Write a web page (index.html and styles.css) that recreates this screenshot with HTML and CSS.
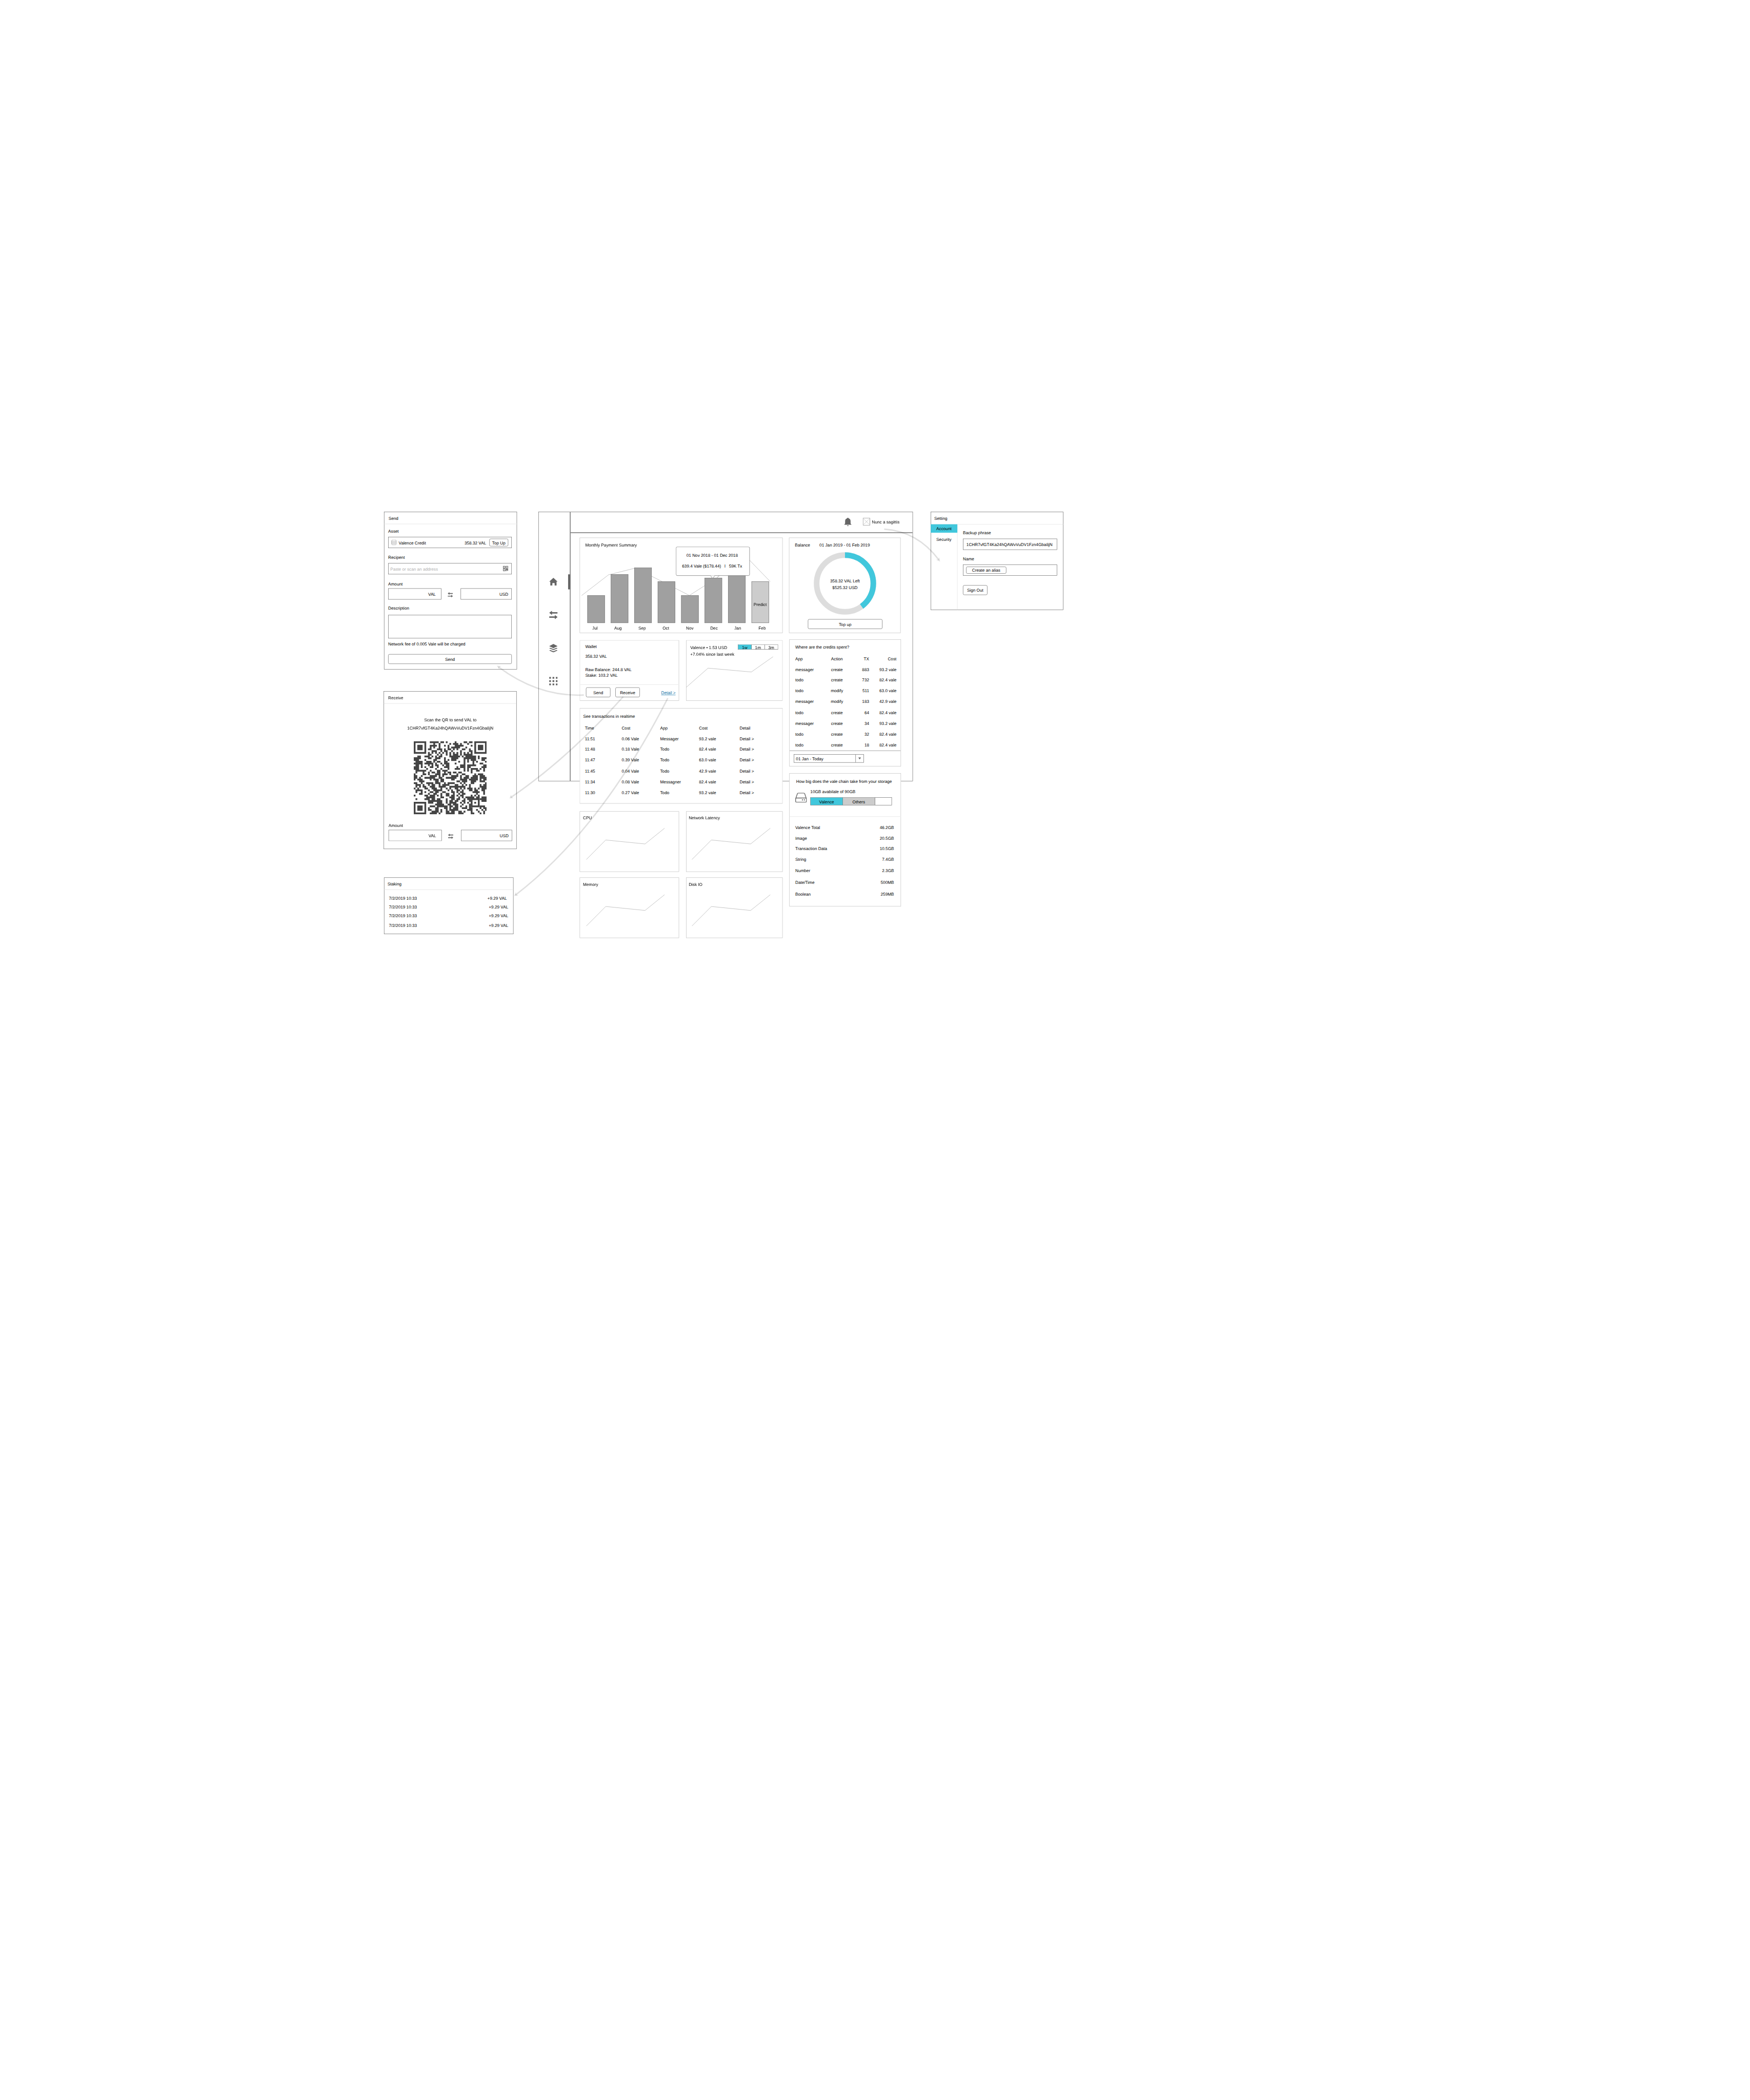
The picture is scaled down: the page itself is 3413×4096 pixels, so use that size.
FILE: index.html
```html
<!DOCTYPE html>
<html lang="en">
<head>
<meta charset="utf-8">
<title>Valence wallet wireframe</title>
<link rel="stylesheet" href="styles.css">
</head>
<body>
<svg class="defs" width="0" height="0" aria-hidden="true">
  <symbol id="i-swap" viewBox="0 0 24 24"><path d="M0 6 8 0v4h16v4H8v4zM24 18l-8-6v4H0v4h16v4z"/></symbol>
  <symbol id="i-home" viewBox="0 -1 24 24"><path d="M12 0 24 11h-3v11h-5.500v-6q0-1-1-1h-4.500q-1 0-1 1v6H3.200V11H0z"/></symbol>
  <symbol id="i-layers" viewBox="0 0 24 24"><path d="M12 0 24 6 12 11.800 0 6zM0 12.300 3 10.900l9 3.700 9-3.700 3 1.400-12 5.300zM0 18.500l3-1.400 9 3.800 9-3.800 3 1.400L12 24z"/></symbol>
  <symbol id="i-grid" viewBox="0 0 24 24"><path d="M0 0h5v5H0zM9.500 0h5v5h-5zM19 0h5v5h-5zM0 9.500h5v5H0zM9.500 9.500h5v5h-5zM19 9.500h5v5h-5zM0 19h5v5H0zM9.500 19h5v5h-5zM19 19h5v5h-5z"/></symbol>
</svg>

<div class="board">

  <!-- Send -->
  <section class="window window--send">
    <header class="window__head">Send</header>
    <div class="send">
      <div class="label label--first">Asset</div>
      <div class="field asset">
        <svg class="asset__icon" viewBox="0 0 15 16"><g fill="none" stroke="#777" stroke-width=".8"><ellipse cx="7.500" cy="3" rx="7" ry="2.500"/><path d="M.5 3v9.500c0 1.400 3.100 2.600 7 2.600s7-1.200 7-2.600V3M.5 6c0 1.400 3.100 2.600 7 2.600s7-1.200 7-2.600M.5 9.200c0 1.400 3.100 2.600 7 2.600s7-1.200 7-2.600"/></g></svg>
        <span class="asset__name">Valence Credit</span>
        <span class="asset__sum">358.32 VAL</span>
        <button class="btn btn--top">Top Up</button>
      </div>
      <div class="label label--recipient">Recipent</div>
      <div class="field recipient">
        <span>Paste or scan an address</span>
        <svg class="recipient__icon" viewBox="0 0 15 15"><path fill-rule="evenodd" d="M0 0h7v7H0zM1.500 1.500v4h4v-4zM8 0h7v7H8zM9.500 1.500v4h4v-4zM0 8h7v7H0zM1.500 9.500v4h4v-4zM3 3h1.200v1.200H3zM11 3h1.200v1.200H11zM3 11h1.200v1.200H3zM8 8h4.500v1.500h1V8H15v5h-3.500v-1.500H10V15H8zM11.500 14H13v1h-1.500zM14 14h1v1h-1z"/></svg>
      </div>
      <div class="label label--amount">Amount</div>
      <div class="amounts">
        <div class="field field--val">VAL</div>
        <svg class="swap"><use href="#i-swap"/></svg>
        <div class="field field--usd">USD</div>
      </div>
      <div class="label label--description">Description</div>
      <div class="field field--area"></div>
      <div class="label label--fee">Network fee of 0.005 Vale will be charged</div>
      <button class="btn btn--submit">Send</button>
    </div>
  </section>

  <!-- Receive -->
  <section class="window window--receive">
    <header class="window__head">Receive</header>
    <div class="receive">
      <p class="receive__hint">Scan the QR to send VAL to</p>
      <p class="receive__address">1CHR7vfGT4Ka24hQAWvVuDV1Fzn4Gba8jN</p>
      <svg class="qr" viewBox="0 0 41 41">
        <path fill="#444" fill-rule="evenodd" d="M0 0h7v7H0zM1 1v5h5V1zM2 2h3v3H2zM34 0h7v7h-7zM35 1v5h5V1zM36 2h3v3h-3zM0 34h7v7H0zM1 35v5h5v-5zM2 36h3v3H2zM32 32h5v5h-5zM33 33v3h3v-3zM34 34h1v1h-1z"/>
        <g transform="translate(0 .5)"><path fill="none" stroke="#444" stroke-width="1.02" d="
M9 0h5M15 0h2M18 0h1M23 0h1M28 0h2M31 0h2
M11 1h1M14 1h1M20 1h1M22 1h3M26 1h1M30 1h1
M9 2h4M14 2h1M17 2h1M19 2h1M23 2h5M32 2h1
M9 3h1M11 3h1M14 3h1M19 3h1M21 3h5M29 3h1
M8 4h2M13 4h3M17 4h1M19 4h2M22 4h1M24 4h1M27 4h2M31 4h1
M10 5h3M15 5h1M17 5h2M21 5h1M26 5h1M31 5h2
M8 6h1M10 6h1M12 6h1M14 6h1M16 6h1M18 6h1M20 6h1M22 6h1M24 6h1M26 6h1M28 6h1M30 6h1M32 6h1
M8 7h2M13 7h1M15 7h1M18 7h1M20 7h1M22 7h3M26 7h1M28 7h5
M2 8h2M6 8h3M10 8h1M12 8h1M14 8h2M20 8h6M27 8h1M29 8h6M36 8h1
M0 9h4M8 9h2M12 9h3M17 9h1M21 9h4M28 9h7M36 9h1M38 9h3
M0 10h3M6 10h1M11 10h2M17 10h1M19 10h1M21 10h3M28 10h1M30 10h1M32 10h3M38 10h2
M1 11h4M7 11h3M11 11h1M13 11h2M17 11h2M25 11h1M28 11h1M30 11h1M33 11h1M35 11h1M40 11h1
M0 12h5M6 12h5M12 12h1M15 12h1M17 12h3M23 12h1M28 12h1M33 12h1M37 12h2
M1 13h2M4 13h1M8 13h1M10 13h1M12 13h2M16 13h1M18 13h2M26 13h3M30 13h5M39 13h2
M0 14h3M4 14h1M6 14h1M9 14h2M13 14h1M17 14h3M24 14h1M26 14h3M30 14h2M38 14h3
M0 15h3M7 15h1M12 15h1M15 15h1M19 15h1M23 15h3M28 15h1M30 15h1M32 15h4M37 15h1M39 15h1
M1 16h6M9 16h1M13 16h2M16 16h3M28 16h1M30 16h1M32 16h1M35 16h2M39 16h1
M1 17h1M5 17h1M8 17h1M10 17h2M13 17h2M17 17h1M19 17h2M22 17h2M25 17h2M32 17h1
M0 18h1M5 18h2M8 18h1M12 18h3M16 18h3M20 18h1M24 18h1M27 18h2M34 18h1M36 18h3
M0 19h2M4 19h1M9 19h4M14 19h1M16 19h1M21 19h4M26 19h1M29 19h2M33 19h3M37 19h3
M0 20h2M3 20h1M6 20h6M14 20h2M18 20h6M26 20h1M28 20h3M32 20h4M37 20h4
M0 21h1M2 21h3M9 21h1M11 21h3M15 21h2M21 21h2M26 21h4M31 21h5M37 21h1M39 21h2
M3 22h3M12 22h2M15 22h2M24 22h2M27 22h3M32 22h3M37 22h3
M0 23h2M4 23h1M7 23h4M12 23h3M17 23h1M19 23h4M26 23h1M28 23h1M32 23h2M40 23h1
M1 24h3M5 24h1M8 24h1M10 24h2M14 24h1M16 24h4M23 24h2M27 24h1M29 24h1M31 24h1M37 24h1M39 24h2
M1 25h1M3 25h1M5 25h2M9 25h3M14 25h4M20 25h9M31 25h1M37 25h4
M0 26h1M2 26h1M6 26h2M10 26h3M15 26h1M18 26h1M20 26h1M23 26h2M26 26h1M28 26h1M30 26h3M34 26h1M36 26h1M38 26h3
M1 27h4M8 27h1M11 27h5M19 27h1M21 27h1M24 27h2M27 27h1M31 27h2M34 27h2M38 27h2
M1 28h1M4 28h1M6 28h1M9 28h2M12 28h2M16 28h2M21 28h2M24 28h1M26 28h2M33 28h4M39 28h1
M3 29h2M8 29h1M11 29h2M15 29h1M18 29h2M22 29h1M25 29h1M27 29h2M35 29h1M39 29h1
M0 30h1M6 30h2M9 30h3M13 30h1M15 30h1M18 30h2M21 30h2M24 30h1M26 30h2M32 30h1M34 30h1M36 30h1
M7 31h5M15 31h2M20 31h3M25 31h1M27 31h1M29 31h5M35 31h2M38 31h3
M1 32h1M6 32h3M10 32h2M13 32h2M18 32h1M21 32h2M24 32h2M28 32h1M30 32h2M37 32h4
M8 33h5M13 33h3M18 33h1M20 33h2M23 33h2M27 33h2M31 33h1M38 33h3
M8 34h3M13 34h3M18 34h1M20 34h4M26 34h1M28 34h1M30 34h1
M12 35h5M19 35h2M22 35h3M27 35h1M31 35h1
M9 36h3M13 36h6M20 36h2M23 36h2M26 36h1M29 36h1M31 36h1M37 36h3
M8 37h1M12 37h2M17 37h2M20 37h1M22 37h3M27 37h3M31 37h2M37 37h1M39 37h2
M8 38h2M12 38h2M15 38h1M18 38h1M20 38h5M30 38h3M35 38h1M38 38h1M40 38h1
M10 39h4M15 39h1M18 39h2M21 39h2M25 39h2M28 39h1M32 39h1M36 39h1M39 39h1
M9 40h4M14 40h1M18 40h5M25 40h3M32 40h2M37 40h1M39 40h1"/></g>
      </svg>
      <div class="label label--qr">Amount</div>
      <div class="amounts">
        <div class="field field--val">VAL</div>
        <svg class="swap"><use href="#i-swap"/></svg>
        <div class="field field--usd">USD</div>
      </div>
    </div>
  </section>

  <!-- Staking -->
  <section class="window window--staking">
    <header class="window__head window__head--staking">Staking</header>
    <ul class="staking">
      <li><span>7/2/2019 10:33</span><span class="staking__first">+9.29 VAL</span></li>
      <li><span>7/2/2019 10:33</span><span>+9.29 VAL</span></li>
      <li><span>7/2/2019 10:33</span><span>+9.29 VAL</span></li>
      <li><span>7/2/2019 10:33</span><span>+9.29 VAL</span></li>
    </ul>
  </section>

  <!-- Dashboard -->
  <section class="window window--dashboard">
    <nav class="sidebar">
      <a class="sidebar__item sidebar__item--active"><svg><use href="#i-home"/></svg></a>
      <a class="sidebar__item"><svg><use href="#i-swap"/></svg></a>
      <a class="sidebar__item"><svg><use href="#i-layers"/></svg></a>
      <a class="sidebar__item sidebar__item--last"><svg><use href="#i-grid"/></svg></a>
    </nav>
    <div class="main">
      <header class="topbar">
        <svg class="topbar__bell" viewBox="0 0 21 24"><path d="M10.200 0c1.300 0 2 .9 2 2 3.600.9 5.800 3.600 5.800 7.500v5.500c0 1.800.8 3.300 2.400 4.300v1H0v-1c1.600-1 2.400-2.500 2.400-4.300V9.500C2.400 5.600 4.600 2.900 8.200 2c0-1.100.7-2 2-2zM7.700 22h5c0 1.200-1.100 2-2.500 2s-2.500-.8-2.500-2z"/></svg>
        <svg class="topbar__avatar" viewBox="0 0 21 21"><rect x=".5" y=".5" width="20" height="20" fill="#fff" stroke="#666"/><path d="M3 3l15 15M18 3 3 18" stroke="#999" stroke-width=".8"/></svg>
        <span class="topbar__name">Nunc a sagittis</span>
      </header>

      <div class="content">
        <div class="content__left">

          <article class="card card--summary">
            <h2>Monthly Payment Summary</h2>
            <svg class="bars" viewBox="0 28 580 244">
              <path class="trend" d="M5.700 165.500 82.500 106.300 159.500 87 236.500 126 313.500 165.300 390.500 116 467.500 46 544.500 125.700"/>
              <g fill="#a0a0a0" stroke="#666">
                <rect x="22.500" y="165.500" width="49" height="78"/>
                <rect x="89.500" y="105.500" width="49" height="138"/>
                <rect x="156.500" y="86.500" width="49" height="157"/>
                <rect x="223.500" y="125.500" width="49" height="118"/>
                <rect x="290.500" y="165.500" width="49" height="78"/>
                <rect x="357.500" y="115.500" width="49" height="128"/>
                <rect x="424.500" y="46.500" width="49" height="197"/>
                <rect x="491.500" y="125.500" width="49" height="118" fill="#ccc"/>
              </g>
              <path class="trend" d="M391.500 115.500 400 108"/>
              <g text-anchor="middle">
                <text x="515.600" y="196">Predict</text>
                <text x="43.700" y="263">Jul</text>
                <text x="109.700" y="263">Aug</text>
                <text x="178.500" y="263">Sep</text>
                <text x="246.200" y="263">Oct</text>
                <text x="314.600" y="263">Nov</text>
                <text x="383.800" y="263">Dec</text>
                <text x="451.400" y="263">Jan</text>
                <text x="521.400" y="263">Feb</text>
              </g>
            </svg>
            <div class="tooltip">
              <p>01 Nov 2018 - 01 Dec 2018</p>
              <p>639.4 Vale ($178.44)&nbsp;&nbsp; l &nbsp;&nbsp;59K Tx</p>
              <svg class="tooltip__tip" viewBox="0 0 12 10"><path d="M0 0h12v1L6 9 0 1z" fill="#fff"/><path d="M.2 1 6 9l5.800-8" fill="none" stroke="#666"/></svg>
            </div>
          </article>

          <div class="pair">
            <article class="card card--wallet">
              <h2>Wallet</h2>
              <p class="wallet__sum">358.32 VAL</p>
              <p class="wallet__raw">Raw Balance: 244.8 VAL</p>
              <p class="wallet__stake">Stake: 103.2 VAL</p>
              <footer class="wallet__foot">
                <button class="btn btn--small">Send</button>
                <button class="btn btn--small">Receive</button>
                <a class="wallet__link">Detail &gt;</a>
              </footer>
            </article>
            <article class="card card--rate">
              <header class="rate__head">
                <h2>Valence • 1.53 USD</h2>
                <div class="tabs"><span class="tabs__on">1w</span><span>1m</span><span>3m</span></div>
              </header>
              <p class="rate__note">+7.04% since last week</p>
              <svg class="spark" viewBox="0 0 276 120"><path class="trend" d="M.7 86.700 62.800 32 186.500 43 248.600-.700"/></svg>
            </article>
          </div>

          <article class="card card--transactions">
            <h2>See transactions in realtime</h2>
            <table class="table table--transactions">
              <colgroup><col class="w-time"><col class="w-cost"><col class="w-app"><col class="w-vale"><col class="w-detail"></colgroup>
              <tr class="short"><td>Time</td><td>Cost</td><td>App</td><td>Cost</td><td>Detail</td></tr>
              <tr class="short"><td>11:51</td><td>0.06 Vale</td><td>Messager</td><td>93.2 vale</td><td>Detail &gt;</td></tr>
              <tr><td>11:48</td><td>0.18 Vale</td><td>Todo</td><td>82.4 vale</td><td>Detail &gt;</td></tr>
              <tr><td>11:47</td><td>0.39 Vale</td><td>Todo</td><td>63.0 vale</td><td>Detail &gt;</td></tr>
              <tr><td>11:45</td><td>0.04 Vale</td><td>Todo</td><td>42.9 vale</td><td>Detail &gt;</td></tr>
              <tr><td>11:34</td><td>0.08 Vale</td><td>Messagner</td><td>82.4 vale</td><td>Detail &gt;</td></tr>
              <tr><td>11:30</td><td>0.27 Vale</td><td>Todo</td><td>93.2 vale</td><td>Detail &gt;</td></tr>
            </table>
          </article>

          <div class="pair pair--metrics">
            <article class="card card--metric">
              <h2>CPU</h2>
              <svg class="spark" viewBox="0 0 276 120"><path class="trend" d="M19.200 111.700 74.500 56 186.800 67.300 242.600 22.300"/></svg>
            </article>
            <article class="card card--metric card--right">
              <h2>Network Latency</h2>
              <svg class="spark" viewBox="0 0 276 120"><path class="trend" d="M16.900 111.700 72.300 56 184.500 67.300 240.700 22.300"/></svg>
            </article>
          </div>
          <div class="pair pair--metrics pair--last">
            <article class="card card--metric">
              <h2>Memory</h2>
              <svg class="spark" viewBox="0 0 276 120"><path class="trend" d="M19.200 111.700 74.500 56 186.800 67.300 242.600 22.300"/></svg>
            </article>
            <article class="card card--metric card--right">
              <h2>Disk IO</h2>
              <svg class="spark" viewBox="0 0 276 120"><path class="trend" d="M16.900 111.700 72.300 56 184.500 67.300 240.700 22.300"/></svg>
            </article>
          </div>
        </div>

        <div class="content__right">
          <article class="card card--balance">
            <header class="balance__head"><h2>Balance</h2><span>01 Jan 2019 - 01 Feb 2019</span></header>
            <div class="donut">
              <svg viewBox="0 0 180 180">
                <circle cx="90" cy="90" r="81" fill="none" stroke="#ddd" stroke-width="16"/>
                <circle cx="90" cy="90" r="81" fill="none" stroke="#41c7dc" stroke-width="16" pathLength="100" stroke-dasharray="40 60" transform="rotate(-90 90 90)"/>
              </svg>
              <div class="donut__text"><p>358.32 VAL Left</p><p>$525.32 USD</p></div>
            </div>
            <button class="btn btn--topup">Top up</button>
          </article>

          <article class="card card--credits">
            <h2>Where are the credits spent?</h2>
            <table class="table table--credits">
              <colgroup><col class="w-name"><col class="w-action"><col class="w-tx"><col class="w-sum"></colgroup>
              <tr class="short"><td>App</td><td>Action</td><td>TX</td><td>Cost</td></tr>
              <tr class="short"><td>messager</td><td>create</td><td>883</td><td>93.2 vale</td></tr>
              <tr><td>todo</td><td>create</td><td>732</td><td>82.4 vale</td></tr>
              <tr><td>todo</td><td>modify</td><td>511</td><td>63.0 vale</td></tr>
              <tr><td>messager</td><td>modify</td><td>183</td><td>42.9 vale</td></tr>
              <tr><td>todo</td><td>create</td><td>64</td><td>82.4 vale</td></tr>
              <tr><td>messager</td><td>create</td><td>34</td><td>93.2 vale</td></tr>
              <tr><td>todo</td><td>create</td><td>32</td><td>82.4 vale</td></tr>
              <tr class="short"><td>todo</td><td>create</td><td>18</td><td>82.4 vale</td></tr>
            </table>
            <footer class="credits__foot">
              <div class="select"><span>01 Jan - Today</span><i><svg viewBox="0 0 8 6"><path d="M0 0h8L4 6z"/></svg></i></div>
            </footer>
          </article>

          <article class="card card--storage">
            <div class="storage__top">
              <h2>How big does the vale chain take from your storage</h2>
              <div class="storage__disk">
                <svg class="storage__icon" viewBox="0 0 33 28"><g fill="none" stroke="#666" stroke-width="2"><rect x="1" y="15" width="31" height="12" rx="2.500"/><path d="M1.300 16.500 6 3q.7-2 2.700-2h15.600q2 0 2.700 2l4.700 13.500"/></g><circle cx="20.500" cy="20.500" r="1.700"/><circle cx="26" cy="20.500" r="1.700"/></svg>
                <div>
                  <p>10GB avabilale of 90GB</p>
                  <div class="usage"><span class="usage__vale">Valence</span><span class="usage__other">Others</span></div>
                </div>
              </div>
            </div>
            <ul class="sizes">
              <li>Valence Total<span>46.2GB</span></li>
              <li>Image<span>20.5GB</span></li>
              <li>Transaction Data<span>10.5GB</span></li>
              <li class="sizes__32">String<span>7.4GB</span></li>
              <li class="sizes__34">Number<span>2.3GB</span></li>
              <li class="sizes__34">Date/Time<span>500MB</span></li>
              <li>Boolean<span>259MB</span></li>
            </ul>
          </article>
        </div>
      </div>
    </div>
  </section>

  <!-- Setting -->
  <section class="window window--setting">
    <header class="window__head window__head--setting">Setting</header>
    <div class="setting">
      <nav class="setting__menu">
        <a class="setting__on">Account</a>
        <a>Security</a>
      </nav>
      <div class="setting__form">
        <div class="label label--phrase">Backup phrase</div>
        <div class="field setting__phrase">1CHR7vfGT4Ka24hQAWvVuDV1Fzn4Gba8jN</div>
        <div class="label label--name">Name</div>
        <div class="field setting__name"><button class="btn btn--alias">Create an alias</button></div>
        <button class="btn btn--signout">Sign Out</button>
      </div>
    </div>
  </section>

  <!-- Flow arrows between the windows -->
  <svg class="flows" viewBox="0 0 3200 2800">
    <g fill="none" stroke="#000" stroke-opacity=".12" stroke-width="4">
      <path d="M2526 1512Q2621 1518 2682 1599.500"/>
      <path d="M1668 1985.700Q1540 1992 1424.500 1906"/>
      <path d="M1780.400 1990.500Q1622 2168 1460 2278"/>
      <path d="M1907.700 1995Q1718 2368 1473 2557"/>
    </g>
    <g fill="#000" fill-opacity=".12">
      <path d="M2685.700 1604.300 2683 1592.300 2681 1599 2673.700 1599z"/>
      <path d="M1419.700 1902.300 1432 1903.500 1425.500 1906.500 1426 1913z"/>
      <path d="M1455.700 2281 1460.500 2270 1461 2277 1467 2280z"/>
      <path d="M1469 2560 1474 2548.500 1474.500 2555.500 1481 2558.500z"/>
    </g>
  </svg>
</div>
</body>
</html>
```

FILE: styles.css
```css
:root {
  --ink: #000;
  --line: #666;
  --card: #bfbfbf;
  --rule: #efefef;
  --accent: #41c7dc;
}

* { box-sizing: border-box; margin: 0; padding: 0; }

body {
  width: 3413px;
  height: 4096px;
  overflow: hidden;
  background: #fff;
}

svg { display: block; fill: var(--line); }
.defs { position: absolute; }

/* The board is laid out in design units and scaled down as a whole */
.board {
  position: relative;
  width: 3200px;
  height: 2800px;
  transform: scale(.68266);
  transform-origin: 0 0;
  font: 12px/14px "Liberation Sans", Arial, Helvetica, sans-serif;
  text-rendering: geometricPrecision;
  color: var(--ink);
}

h2 { font: inherit; white-space: nowrap; }
p, li, span, a { white-space: nowrap; }
ul { list-style: none; }
text { fill: var(--ink); }

/* Windows */
.window { position: absolute; background: #fff; border: 1px solid var(--line); }
.window--send { left: 1097px; top: 1462px; width: 380px; height: 451px; }
.window--receive { left: 1096px; top: 1975px; width: 380px; height: 451px; }
.window--staking { left: 1097px; top: 2507px; width: 370px; height: 162px; }
.window--dashboard { left: 1538px; top: 1462px; width: 1070px; height: 770px; display: flex; }
.window--setting { left: 2659px; top: 1462px; width: 379px; height: 281px; }

.window__head { height: 35px; padding: 11px 12px 0; border-bottom: 2px solid var(--rule); }
.window__head--staking { padding: 11px 9px 0; }
.window__head--setting { height: 36px; padding: 12px 9px 0; }

/* Form parts */
.field {
  height: 32px;
  border: 1px solid var(--line);
  background: #fff;
  line-height: 32px;
}
.field--val { width: 152px; padding-right: 15px; text-align: right; }
.field--usd { width: 146px; padding-right: 9px; text-align: right; }
.field--area { height: 67px; }
.amounts { display: flex; }
.swap { width: 15px; height: 15px; margin: 11px 22px 0 18px; }

.btn {
  display: block;
  border: 1px solid var(--line);
  border-radius: 4px;
  background: #fff;
  color: var(--ink);
  font: inherit;
  text-align: center;
  text-rendering: inherit;
  white-space: nowrap;
  height: 28px;
  line-height: 28px;
}

/* Send */
.send { padding: 0 14px 0 11px; }
.label--first { margin: 13px 0 9px; }
.label--recipient { margin: 20px 0 9px; }
.label--amount { margin: 21px 0 5px; }
.label--description { margin: 17px 0 13px; }
.label--fee { margin: 9px 0 22px; }
.asset { display: flex; align-items: flex-start; padding: 0 9px 0 8px; }
.asset__icon { width: 15px; height: 16px; margin: 7px 6px 0 0; }
.asset__sum { margin: 0 9px 0 auto; }
.btn--top { width: 54px; height: 22px; line-height: 22px; margin-top: 4px; }
.recipient { display: flex; justify-content: space-between; padding: 0 9px 0 5px; color: #b0b0b0; }
.recipient__icon { width: 15px; height: 15px; margin-top: 7px; }
.btn--submit { width: 353px; }

/* Receive */
.receive { padding: 39px 12px 0 13px; }
.receive__hint, .receive__address { text-align: center; }
.receive__address { margin-top: 10px; }
.qr { width: 208.700px; height: 208.700px; margin: 30.300px 0 0 71.700px; }
.label--qr { margin: 25px 0 5px; }

/* Staking */
.staking { padding: 17px 14px 0 13px; }
.staking li { display: flex; justify-content: space-between; height: 25px; }
.staking li:last-child { margin-top: 3px; }
.staking__first { margin-right: 4px; }

/* Sidebar */
.sidebar { width: 91px; height: 768px; flex: none; padding: 187px 0 0 30px; border-right: 2px solid var(--line); }
.sidebar__item { display: block; position: relative; height: 24px; margin-bottom: 71px; }
.sidebar__item svg { width: 24px; height: 24px; }
.sidebar__item--last { margin-top: -1px; }
.sidebar__item--active::after {
  content: "";
  position: absolute;
  right: -1px;
  top: -9px;
  width: 6px;
  height: 43px;
  background: var(--line);
}

.main { width: 977px; }
.topbar {
  display: flex;
  align-items: center;
  justify-content: flex-end;
  height: 60px;
  padding: 0 36px 2px 0;
  border-bottom: 2px solid var(--line);
}
.topbar__bell { width: 21px; height: 24px; margin-right: 32px; }
.topbar__avatar { width: 21px; height: 21px; margin: -1px 5px 0 0; }
.topbar__name { width: 80px; }

/* Cards */
.content { display: flex; gap: 18px; padding: 13px 0 0 26px; }
.content__left { width: 580px; flex: none; }
.content__right { width: 320px; flex: none; }
.card { position: relative; background: #fff; border: 1px solid var(--card); }
.trend { fill: none; stroke: #aaa; stroke-width: 1; }
.spark { width: 276px; height: 120px; margin-left: -1px; overflow: visible; }

.card--summary { height: 273px; padding-top: 13px; }
.card--summary h2 { padding-left: 15px; }
.bars { width: 580px; height: 244px; margin-left: -1px; }
.tooltip {
  position: absolute;
  left: 274px;
  top: 25px;
  width: 211px;
  height: 83px;
  padding: 17px 4px 0 0;
  border: 1px solid var(--line);
  border-radius: 4px;
  background: #fff;
  text-align: center;
}
.tooltip p + p { margin-top: 17px; }
.tooltip__tip { position: absolute; left: 98px; top: 81px; width: 12px; height: 10px; }

.pair { display: flex; gap: 20px; margin-top: 20px; height: 173px; }
.card--wallet { width: 284px; padding-top: 11px; }
.card--wallet > h2, .card--wallet > p { padding-left: 15px; }
.wallet__sum { margin-top: 13px; }
.wallet__raw { margin-top: 24px; }
.wallet__stake { margin-top: 2px; }
.wallet__foot {
  display: flex;
  gap: 14px;
  margin-top: 19px;
  padding: 7px 9px 0 17px;
  border-top: 2px solid var(--rule);
}
.btn--small { width: 70px; }
.wallet__link { margin: 9px 0 0 auto; color: #0b70a5; text-decoration: underline; }

.card--rate { width: 276px; padding-top: 11px; }
.rate__head { display: flex; justify-content: space-between; height: 22px; padding: 0 12px 0 11px; }
.rate__head h2 { padding-top: 2px; }
.rate__note { padding-left: 11px; }
.tabs { display: flex; width: 115px; height: 15px; border: 1px solid var(--line); line-height: 16px; }
.tabs span { width: 38px; height: 13px; text-align: center; border-right: 1px solid var(--line); }
.tabs span:last-child { width: 37px; border-right: 0; }
.tabs .tabs__on { background: var(--accent); }

.card--transactions { height: 273px; margin-top: 21px; padding-top: 16px; }
.card--transactions h2 { padding-left: 9px; }
.table { border-collapse: collapse; table-layout: fixed; line-height: 30px; }
.table tr { height: 31px; }
.table .short { height: 30px; }
.table td { vertical-align: top; white-space: nowrap; height: inherit; }
.table--transactions { width: 542px; margin: 12px 0 0 14px; }
.w-time { width: 105px; }
.w-cost { width: 110px; }
.w-app { width: 111px; }
.w-vale { width: 116px; }
.w-detail { width: 100px; }

.pair--metrics { margin-top: 22px; }
.pair--last { margin-top: 16px; }
.card--metric { width: 284px; padding-top: 11px; }
.card--metric h2 { padding-left: 8.500px; }
.card--right { width: 276px; }
.card--right h2 { padding-left: 6.500px; }
.pair--last .card--metric { padding-top: 12px; }

/* Balance */
.card--balance { width: 319px; height: 273px; padding-top: 13px; }
.balance__head { display: flex; padding-left: 16px; height: 14px; }
.balance__head h2 { width: 70px; }
.balance__head span { padding-top: 1px; }
.donut { display: grid; width: 180px; height: 180px; margin: 13px 0 12px 69px; }
.donut > * { grid-area: 1 / 1; }
.donut__text { padding-top: 74px; line-height: 19px; text-align: center; }
.btn--topup { width: 213px; margin-left: 53px; }

/* Credits */
.card--credits { width: 319px; height: 363px; margin: 18px 0 0 1px; padding-top: 14px; }
.card--credits h2 { padding-left: 16px; }
.table--credits { width: 289px; margin: 12px 0 0 16px; }
.w-name { width: 89px; }
.w-action { width: 60px; }
.w-tx { width: 62px; }
.w-sum { width: 78px; }
.table--credits td:nth-child(2) { text-align: center; }
.table--credits td:nth-child(n+3) { text-align: right; }
.credits__foot { padding: 9px 12px 0; border-top: 2px solid var(--card); }
.select { display: flex; width: 200px; height: 24px; border: 1px solid var(--line); line-height: 24px; }
.select span { flex: 1; padding-left: 5px; }
.select i { width: 23px; padding: 8px 0 0 7px; border-left: 1px solid var(--line); }
.select svg { width: 8px; height: 6px; }

/* Storage */
.card--storage { width: 319px; height: 381px; margin: 19px 0 0 1px; }
.storage__top { height: 124px; padding-top: 16px; border-bottom: 2px solid var(--rule); }
.storage__top h2 { padding-left: 18.500px; }
.storage__disk { display: flex; gap: 10px; padding: 15px 0 0 16px; }
.storage__icon { width: 33px; height: 28px; margin-top: 10px; }
.usage { display: flex; width: 233px; height: 23px; margin-top: 9px; border: 1px solid var(--line); line-height: 24px; }
.usage span { width: 92px; height: 21px; text-align: center; border-right: 1px solid var(--line); }
.usage__vale { background: var(--accent); }
.usage__other { background: #ccc; }
.sizes { padding: 16px 19px 0 16px; }
.sizes li { display: flex; justify-content: space-between; height: 30px; line-height: 30px; }
.sizes .sizes__32 { height: 32px; }
.sizes .sizes__34 { height: 34px; }

/* Setting */
.setting { display: flex; height: 243px; }
.setting__menu { width: 76px; border-right: 2px solid var(--rule); line-height: 26px; }
.setting__menu a { display: block; padding-left: 15px; margin-top: 6px; }
.setting__menu .setting__on {
  width: 76px;
  height: 24px;
  margin: -1px 0 0 -1px;
  padding-left: 16px;
  background: var(--accent);
}
.setting__form { padding: 17px 0 0 15px; }
.label--phrase { margin-bottom: 9px; }
.label--name { margin: 19px 0 9px; }
.setting__phrase, .setting__name { width: 269px; }
.setting__phrase { padding-right: 3px; text-align: center; }
.setting__name { padding: 5px 8px; }
.btn--alias { width: 115px; height: 20px; line-height: 20px; }
.btn--signout { width: 70px; margin-top: 27px; }

.flows { position: absolute; left: 0; top: 0; width: 3200px; height: 2800px; pointer-events: none; }
```
